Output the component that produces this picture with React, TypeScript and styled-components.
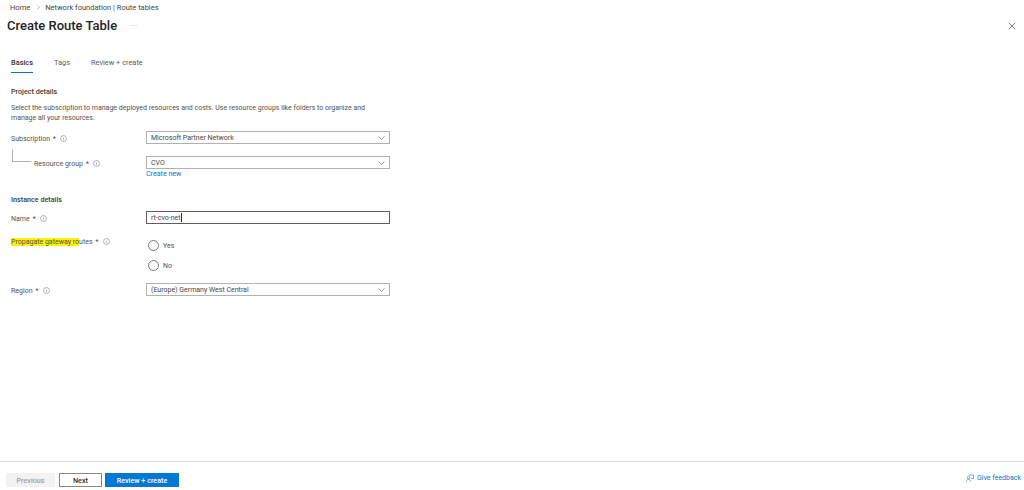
import { createGlobalStyle } from "styled-components";
import styled from "styled-components";

const GlobalStyle = createGlobalStyle`
  html, body {
    margin: 0;
    padding: 0;
    background: #fff;
  }
  body {
    font-family: Roboto, "Noto Sans", "Liberation Sans", sans-serif;
    color: #323130;
  }
`;

const Page = styled.div`
  width: 1024px;
  height: 490px;
  display: flex;
  flex-direction: column;
  overflow: hidden;
`;

const Breadcrumb = styled.nav`
  display: flex;
  align-items: center;
  height: 14px;
  padding-left: 10px;
  font-size: 7.5px;
  color: #484644;
`;

const Crumb = styled.span`
  white-space: nowrap;
`;

const CrumbChevron = styled.svg`
  width: 5px;
  height: 5px;
  margin: 0 4px 0 6px;
`;

const TitleBar = styled.header`
  display: flex;
  align-items: center;
  height: 22px;
  padding: 0 8px 0 7px;
`;

const Title = styled.h1`
  margin: 0;
  font-size: 13px;
  font-weight: 500;
  color: #252423;
  white-space: nowrap;
`;

const More = styled.span`
  margin: 0 0 0 13px;
  font-size: 8px;
  letter-spacing: 0.3px;
  color: #a19f9d;
`;

const Close = styled.svg`
  width: 8px;
  height: 8px;
  margin-left: auto;
  margin-top: 1px;
`;

const Tabs = styled.div`
  display: flex;
  gap: 21px;
  margin: 20px 0 0 11px;
  height: 19px;
`;

const Tab = styled.div<{ $active?: boolean }>`
  font-size: 7.4px;
  font-weight: ${(p) => (p.$active ? 500 : 400)};
  color: ${(p) => (p.$active ? "#323130" : "#5c5a58")};
  border-bottom: ${(p) => (p.$active ? "1px solid #0078d4" : "1px solid transparent")};
  line-height: 14px;
  height: 16px;
  white-space: nowrap;
`;

const Main = styled.main`
  flex: 1;
  padding: 0 0 0 11px;
`;

const SectionTitle = styled.h2<{ $top: number }>`
  margin: ${(p) => p.$top}px 0 0;
  font-size: 7.2px;
  line-height: 12px;
  font-weight: 500;
  color: #3b3a39;
`;

const Description = styled.p`
  margin: 5px 0 0;
  width: 370px;
  font-size: 7px;
  line-height: 10px;
  color: #555351;
`;

const Row = styled.div<{ $top: number }>`
  display: grid;
  grid-template-columns: 135px 244px;
  margin-top: ${(p) => p.$top}px;
`;

const LabelCell = styled.div`
  display: flex;
  align-items: center;
  height: 13px;
  margin-top: 1px;
  font-size: 7px;
  color: #555351;
  white-space: nowrap;
`;

const TreeLine = styled.div`
  width: 18px;
  height: 12px;
  margin: -17px 3px 0 1px;
  border-left: 1px solid #b3b0ad;
  border-bottom: 1px solid #b3b0ad;
`;

const Highlight = styled.span`
  background: #fff200;
`;

const Required = styled.span`
  margin-left: 3px;
  color: #a4262c;
`;

const InfoIcon = styled.svg`
  width: 7px;
  height: 7px;
  margin-left: 4px;
`;

const Select = styled.div`
  box-sizing: border-box;
  display: flex;
  align-items: center;
  justify-content: space-between;
  height: 13px;
  padding: 0 4px;
  border: 1px solid #b3b0ad;
  font-size: 7px;
  color: #484644;
`;

const Chevron = styled.svg`
  width: 7px;
  height: 4px;
`;

const LinkText = styled.a`
  display: block;
  margin-top: 0;
  font-size: 7.1px;
  line-height: 9px;
  color: #0078d4;
`;

const TextBox = styled.div`
  box-sizing: border-box;
  display: flex;
  align-items: center;
  height: 13px;
  padding-left: 4px;
  border: 1px solid #605e5c;
  font-size: 7px;
  color: #484644;
`;

const Caret = styled.span`
  width: 1px;
  height: 9px;
  background: #323130;
`;

const RadioGroup = styled.div`
  display: flex;
  flex-direction: column;
  gap: 9px;
  padding: 6px 0 0 2px;
`;

const RadioRow = styled.label`
  display: flex;
  align-items: center;
  gap: 4px;
  height: 11px;
  font-size: 7px;
  color: #555351;
`;

const RadioCircle = styled.span`
  box-sizing: border-box;
  width: 11px;
  height: 11px;
  border: 1px solid #7a7876;
  border-radius: 50%;
`;

const Footer = styled.footer`
  display: flex;
  align-items: flex-start;
  height: 29px;
  box-sizing: border-box;
  padding: 11px 3px 0 6px;
  border-top: 1px solid #dcdcdc;
`;

const FooterButton = styled.button<{ $kind: "disabled" | "default" | "primary"; $width: number; $gap: number }>`
  box-sizing: border-box;
  width: ${(p) => p.$width}px;
  height: 14px;
  margin-right: ${(p) => p.$gap}px;
  padding: 0;
  font-family: inherit;
  font-size: 7.2px;
  font-weight: 500;
  border: 1px solid
    ${(p) => (p.$kind === "primary" ? "#0078d4" : p.$kind === "default" ? "#8a8886" : "#f3f2f1")};
  background: ${(p) => (p.$kind === "primary" ? "#0078d4" : p.$kind === "default" ? "#fff" : "#f3f2f1")};
  color: ${(p) => (p.$kind === "primary" ? "#fff" : p.$kind === "default" ? "#323130" : "#a19f9d")};
`;

const Feedback = styled.a`
  display: flex;
  align-items: center;
  gap: 3px;
  height: 10px;
  margin-left: auto;
  font-size: 7px;
  color: #0078d4;
  white-space: nowrap;
`;

const FeedbackIcon = styled.svg`
  width: 8px;
  height: 8px;
`;

const Info = () => (
  <InfoIcon viewBox="0 0 14 14" fill="none" stroke="#7a7876" strokeWidth="1.1">
    <circle cx="7" cy="7" r="6" />
    <path d="M7 6.2v4M7 3.6v1.2" />
  </InfoIcon>
);

const Caretdown = () => (
  <Chevron viewBox="0 0 14 8" fill="none" stroke="#605e5c" strokeWidth="1.2">
    <path d="M1 1l6 6 6-6" />
  </Chevron>
);

export default function App() {
  return (
    <Page>
      <GlobalStyle />
      <Breadcrumb>
        <Crumb>Home</Crumb>
        <CrumbChevron viewBox="0 0 6 8" fill="none" stroke="#8a8886" strokeWidth="1">
          <path d="M1.5 1l3 3-3 3" />
        </CrumbChevron>
        <Crumb>Network foundation | Route tables</Crumb>
      </Breadcrumb>
      <TitleBar>
        <Title>Create Route Table</Title>
        <More>···</More>
        <Close viewBox="0 0 10 10" fill="none" stroke="#605e5c" strokeWidth="1">
          <path d="M1 1l8 8M9 1l-8 8" />
        </Close>
      </TitleBar>
      <Tabs>
        <Tab $active>Basics</Tab>
        <Tab>Tags</Tab>
        <Tab>Review + create</Tab>
      </Tabs>
      <Main>
        <SectionTitle $top={11}>Project details</SectionTitle>
        <Description>
          Select the subscription to manage deployed resources and costs. Use resource groups like folders to organize
          and manage all your resources.
        </Description>
        <Row $top={8}>
          <LabelCell>
            Subscription<Required>*</Required>
            <Info />
          </LabelCell>
          <Select>
            Microsoft Partner Network
            <Caretdown />
          </Select>
        </Row>
        <Row $top={11}>
          <LabelCell>
            <TreeLine />
            Resource group<Required>*</Required>
            <Info />
          </LabelCell>
          <div>
            <Select>
              CVO
              <Caretdown />
            </Select>
            <LinkText>Create new</LinkText>
          </div>
        </Row>
        <SectionTitle $top={16}>Instance details</SectionTitle>
        <Row $top={5}>
          <LabelCell>
            Name<Required>*</Required>
            <Info />
          </LabelCell>
          <TextBox>
            rt-cvo-net
            <Caret />
          </TextBox>
        </Row>
        <Row $top={9}>
          <LabelCell>
            <span>
              <Highlight>Propagate gateway ro</Highlight>utes
            </span>
            <Required>*</Required>
            <Info />
          </LabelCell>
          <RadioGroup>
            <RadioRow>
              <RadioCircle />
              Yes
            </RadioRow>
            <RadioRow>
              <RadioCircle />
              No
            </RadioRow>
          </RadioGroup>
        </Row>
        <Row $top={12}>
          <LabelCell>
            Region<Required>*</Required>
            <Info />
          </LabelCell>
          <Select>
            (Europe) Germany West Central
            <Caretdown />
          </Select>
        </Row>
      </Main>
      <Footer>
        <FooterButton $kind="disabled" $width={49} $gap={4}>
          Previous
        </FooterButton>
        <FooterButton $kind="default" $width={43} $gap={3}>
          Next
        </FooterButton>
        <FooterButton $kind="primary" $width={74} $gap={0}>
          Review + create
        </FooterButton>
        <Feedback>
          <FeedbackIcon viewBox="0 0 16 16" fill="none" stroke="#0078d4" strokeWidth="1.1">
            <path d="M6 2h9v7h-5" />
            <circle cx="5" cy="7" r="2.5" />
            <path d="M1 15c0-3 2-4.500 4-4.500s4 1.500 4 4.500" />
          </FeedbackIcon>
          Give feedback
        </Feedback>
      </Footer>
    </Page>
  );
}
